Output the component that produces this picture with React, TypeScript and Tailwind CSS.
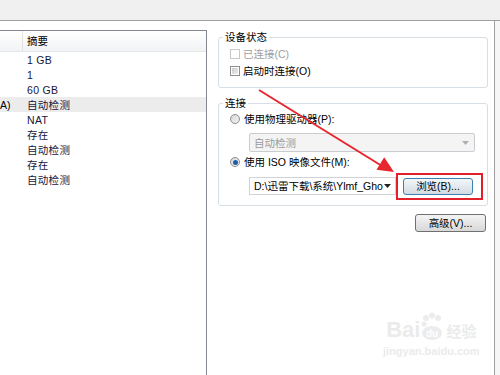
import React from 'react'

const rows = [
  { name: '', value: '1 GB' },
  { name: '', value: '1' },
  { name: '', value: '60 GB' },
  { name: 'A)', value: '自动检测', active: true },
  { name: '', value: 'NAT' },
  { name: '', value: '存在' },
  { name: '', value: '自动检测' },
  { name: '', value: '存在' },
  { name: '', value: '自动检测' }
]

function CheckBox({ disabled }: { disabled?: boolean }) {
  return (
    <span
      className={
        disabled
          ? 'w-[10px] h-[10px] border border-[#c9c9c9] bg-white shrink-0'
          : 'w-[10px] h-[10px] border border-[#8e8f8f] bg-white p-[1px] shrink-0 flex'
      }
    >
      {!disabled && <span className="flex-1 bg-gradient-to-br from-[#cbcbcb] to-[#eeeeee]" />}
    </span>
  )
}

function Radio({ checked }: { checked?: boolean }) {
  return (
    <span className="w-[10px] h-[10px] rounded-full border border-[#8e8f8f] bg-gradient-to-br from-[#d6d6d6] to-[#f4f4f4] flex items-center justify-center shrink-0">
      {checked && <span className="w-[5px] h-[5px] rounded-full bg-[#1e5fa8]" />}
    </span>
  )
}

function Arrow({ color }: { color: string }) {
  return (
    <svg width="7" height="4" viewBox="0 0 7 4">
      <path d="M0 0 L7 0 L3.5 4 Z" fill={color} />
    </svg>
  )
}

export default function App() {
  return (
    <div className="relative w-[500px] h-[375px] bg-white flex flex-col overflow-hidden text-[10.5px] leading-[12px] text-black font-['Liberation_Sans','Noto_Sans_CJK_SC',sans-serif]">
      <div className="h-[21px] shrink-0 bg-[#f0f0f0] border-b border-[#a0a0a0]" />
      <div className="flex flex-1 min-h-0">
        {/* device list */}
        <div className="w-[207px] pt-[9px] flex flex-col">
          <div className="flex-1 border-t border-r border-[#828790] flex flex-col">
            <div className="h-[21px] flex bg-gradient-to-b from-white to-[#f2f3f5] border-b border-[#e3e6ea]">
              <div className="w-[23px] border-r border-[#e3e3e3]" />
              <div className="pl-[4px] flex items-center">摘要</div>
            </div>
            {rows.map((r, i) => (
              <div key={i} className={'h-[15px] flex items-center ' + (r.active ? 'bg-[#ececec]' : '')}>
                <div className="w-[23px] overflow-hidden whitespace-nowrap">{r.name}</div>
                <div className="pl-[4px] text-[#15153a] tracking-[0.3px]">{r.value}</div>
              </div>
            ))}
          </div>
        </div>

        {/* settings */}
        <div className="flex-1 pl-[11px] pr-[6px] flex flex-col">
          <fieldset className="mt-[10px] border border-[#d5dfe5] rounded-[3px]">
            <legend className="ml-[4px] px-[2px] leading-[12px]">设备状态</legend>
            <div className="pl-[11px] pt-[3px] pb-[9px] flex flex-col gap-[2px]">
              <div className="h-[15px] flex items-center gap-[3px] text-[#a0a0a0]">
                <CheckBox disabled />
                <span>已连接(C)</span>
              </div>
              <div className="h-[15px] flex items-center gap-[3px]">
                <CheckBox />
                <span>启动时连接(O)</span>
              </div>
            </div>
          </fieldset>

          <fieldset className="mt-[9px] border border-[#d5dfe5] rounded-[3px]">
            <legend className="ml-[4px] px-[2px] leading-[12px]">连接</legend>
            <div className="pl-[11px] pt-[3px] pb-[10px] flex flex-col">
              <div className="h-[14px] flex items-center gap-[4px]">
                <Radio />
                <span>使用物理驱动器(P):</span>
              </div>
              <div className="mt-[7px] ml-[19px] w-[226px] h-[19px] border border-[#c9cdd2] rounded-[2px] bg-[#f4f4f4] flex items-center justify-between pl-[4px] pr-[5px] text-[#9a9a9a]">
                <span>自动检测</span>
                <Arrow color="#b0b0b0" />
              </div>
              <div className="mt-[3px] h-[14px] flex items-center gap-[4px]">
                <Radio checked />
                <span>使用 ISO 映像文件(M):</span>
              </div>
              <div className="mt-[8px] ml-[19px] flex items-center">
                <div className="w-[147px] h-[18px] border border-[#d0d3d8] bg-white flex items-center justify-between pl-[4px] pr-[4px] whitespace-nowrap overflow-hidden">
                  <span>D:\迅雷下载\系统\Ylmf_Gho</span>
                  <Arrow color="#222" />
                </div>
                <div className="relative ml-[7px]">
                  <div className="w-[70px] h-[17px] border border-[#3c7fb1] rounded-[3px] bg-gradient-to-b from-[#f3f7fa] to-[#d2dbe2] flex items-center justify-center">
                    浏览(B)...
                  </div>
                  <div className="absolute left-[-7px] right-[-10px] top-[-5px] bottom-[-5px] border-2 border-[#e2202a]" />
                </div>
              </div>
            </div>
          </fieldset>

          <div className="mt-[8px] flex justify-end pr-[2px]">
            <div className="w-[71px] h-[18px] border border-[#707070] rounded-[3px] bg-gradient-to-b from-[#f4f4f4] to-[#d8d8d8] flex items-center justify-center">
              高级(V)...
            </div>
          </div>
        </div>

        <div className="w-[6px] border-l border-[#a0a0a0] bg-[#f6f6f6]" />
      </div>

      {/* annotation arrow */}
      <svg className="absolute inset-0 pointer-events-none" width="500" height="375">
        <line x1="259" y1="90" x2="382" y2="166" stroke="#e8262d" strokeWidth="2" />
        <polygon points="394,172 376.5,169.8 384.2,157.2" fill="#e8262d" />
      </svg>

      {/* watermark */}
      <div className="absolute left-[383px] top-[312px] flex flex-col items-center text-[#ebebeb]">
        <div className="flex items-end">
          <span className="text-[22px] leading-[24px] font-bold">Bai</span>
          <svg width="24" height="30" viewBox="0 0 24 30">
            <circle cx="6" cy="6" r="3" fill="#ececec" />
            <circle cx="12" cy="3.5" r="3" fill="#ececec" />
            <circle cx="18" cy="6" r="3" fill="#ececec" />
            <circle cx="4" cy="12" r="2.6" fill="#ececec" />
            <ellipse cx="12" cy="21" rx="10" ry="7" fill="#ececec" />
            <text x="12" y="24.5" textAnchor="middle" fontSize="10" fontWeight="bold" fill="#ffffff" fontFamily="Liberation Sans, sans-serif">du</text>
          </svg>
          <span className="text-[15px] leading-[22px] font-bold ml-[2px] font-['Noto_Sans_CJK_SC',sans-serif]">经验</span>
        </div>
        <span className="text-[11px] leading-[14px] mt-[2px] font-bold">jingyan.baidu.com</span>
      </div>
    </div>
  )
}
